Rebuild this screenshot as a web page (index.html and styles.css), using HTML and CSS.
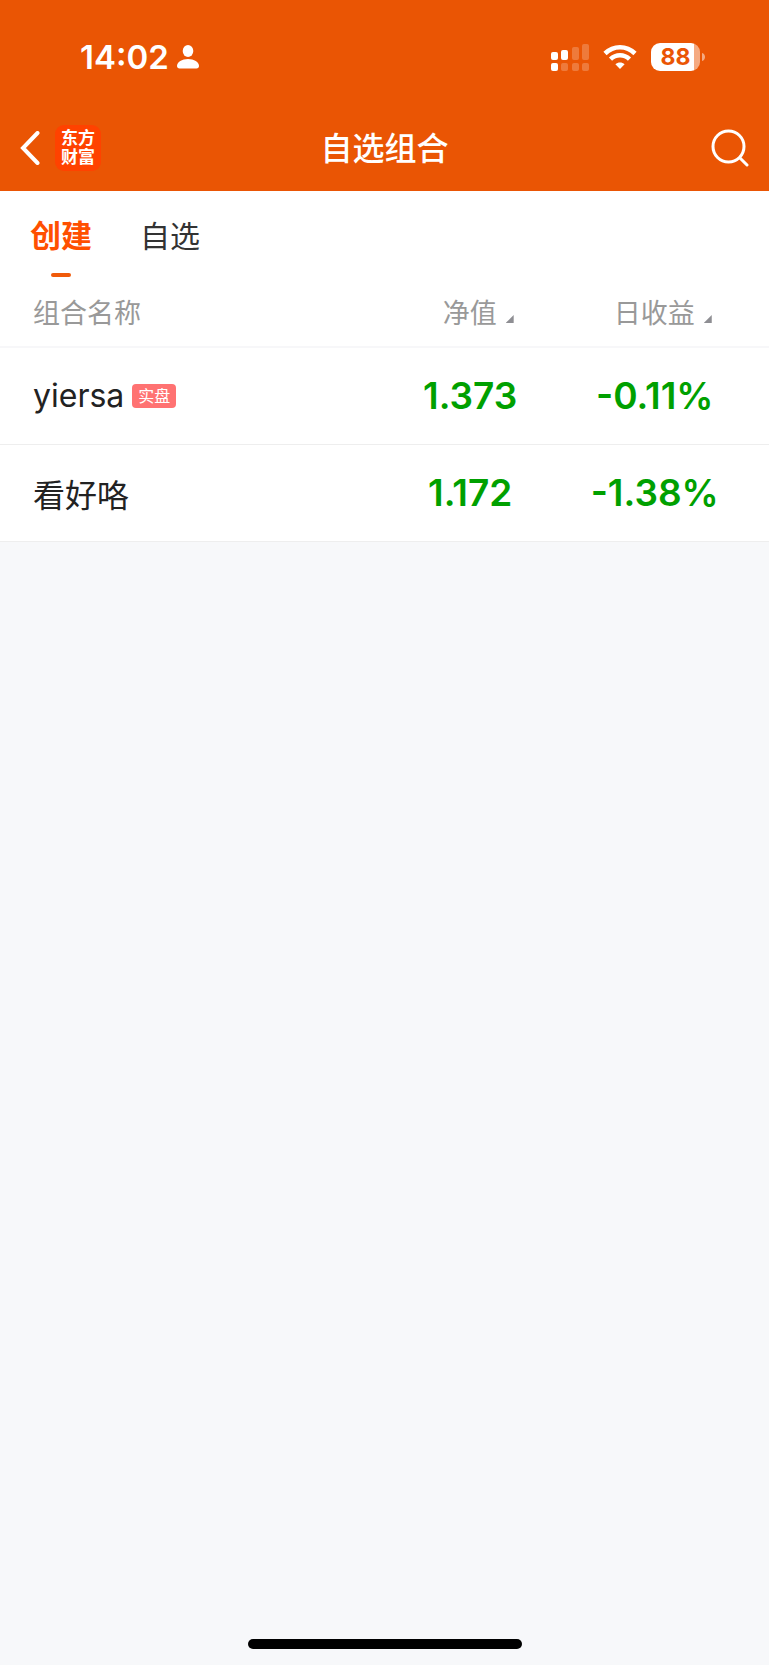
FILE: index.html
```html
<!DOCTYPE html>
<html lang="zh-CN">

<head>
    <meta charset="UTF-8">
    <meta name="viewport" content="width=device-width, initial-scale=1.0">
    <title>自选组合</title>
    <link rel="stylesheet" href="styles.css">
</head>

<body>
    <header class="header">
        <div class="status-bar">
            <div class="status-left">
                <span class="time">14:02</span>
                <svg width="22" height="24" viewBox="0 0 22 24" fill="#fff">
                    <ellipse cx="11" cy="6" rx="5.3" ry="6" />
                    <path d="M0 21C0 17 5 14 11 14s11 3 11 7c0 1.5-1 2.500-2.500 2.500h-17C1 23.500 0 22.500 0 21z" />
                </svg>
            </div>
            <div class="status-right">
                <svg width="38" height="28" viewBox="0 0 38 28" fill="#fff">
                    <rect x="0" y="9" width="7" height="8" rx="2" />
                    <rect x="10" y="7" width="7" height="10" rx="2" />
                    <rect x="0" y="20" width="7" height="8" rx="2" />
                    <g opacity=".22">
                        <rect x="21" y="4" width="7" height="13" rx="2" />
                        <rect x="31" y="1" width="7" height="16" rx="2" />
                        <rect x="10" y="20" width="7" height="8" rx="2" />
                        <rect x="21" y="20" width="7" height="8" rx="2" />
                        <rect x="31" y="20" width="7" height="8" rx="2" />
                    </g>
                </svg>
                <svg width="34" height="26" viewBox="0 0 34 26" fill="none" stroke="#fff" stroke-width="4.6">
                    <path d="M2 9.5C10.5 1.2 23.5 1.2 32 9.5" />
                    <path d="M7.500 15.200C13 10 21 10 26.500 15.200" />
                    <path d="M17 25l-4.600-4.700c2.600-2.500 6.600-2.500 9.200 0z" fill="#fff" stroke="none" />
                </svg>
                <div class="battery">
                    <span class="battery-level">88</span>
                    <svg width="3" height="8" viewBox="0 0 3 8" fill="#fff" opacity=".5">
                        <path d="M0 0c4 1 4 7 0 8z" />
                    </svg>
                </div>
            </div>
        </div>
        <nav class="nav-bar">
            <div class="nav-left">
                <button class="icon-btn" aria-label="返回">
                    <svg width="20" height="34" viewBox="0 0 20 34" fill="none" stroke="#fff" stroke-width="4" stroke-linecap="round">
                        <path d="M17.5 2L3 17l14.5 15" />
                    </svg>
                </button>
                <a class="logo" href="#"><span>东方</span><span>财富</span></a>
            </div>
            <h1 class="title">自选组合</h1>
            <button class="icon-btn" aria-label="搜索">
                <svg width="38" height="38" viewBox="0 0 38 38" fill="none" stroke="#fff" stroke-width="3" stroke-linecap="round">
                    <circle cx="17.5" cy="17.5" r="15.5" />
                    <path d="M29 29l7 7" />
                </svg>
            </button>
        </nav>
    </header>

    <main class="content">
        <div class="tabs">
            <button class="tab active">创建</button>
            <button class="tab">自选</button>
        </div>
        <table class="list">
            <thead>
                <tr>
                    <th class="name">组合名称</th>
                    <th><button class="sort">净值<i class="arrow"></i></button></th>
                    <th><button class="sort">日收益<i class="arrow"></i></button></th>
                    <th class="edge"></th>
                </tr>
            </thead>
            <tbody>
                <tr>
                    <td class="name"><div class="name-cell">yiersa <span class="tag">实盘</span></div></td>
                    <td class="value">1.373</td>
                    <td class="value">-0.11%</td>
                    <td class="edge"></td>
                </tr>
                <tr>
                    <td class="name"><div class="name-cell">看好咯</div></td>
                    <td class="value">1.172</td>
                    <td class="value">-1.38%</td>
                    <td class="edge"></td>
                </tr>
            </tbody>
        </table>
    </main>

    <div class="home-indicator"></div>
</body>

</html>
```

FILE: styles.css
```css
* {
    box-sizing: border-box;
}

body {
    margin: 0;
    min-height: 100vh;
    display: flex;
    flex-direction: column;
    background: #f7f8fa;
    color: #222;
    font-family: Inter, "Noto Sans CJK SC", sans-serif;
}

button {
    padding: 0;
    border: none;
    background: none;
    color: inherit;
    font: inherit;
}

svg {
    display: block;
}

.header {
    background: #ea5504;
    color: #fff;
}

.status-bar {
    display: flex;
    justify-content: space-between;
    align-items: center;
    height: 105px;
    padding: 9px 64px 0 80px;
}

.status-left,
.status-right {
    display: flex;
    align-items: center;
}

.status-left {
    gap: 8px;
}

.status-right {
    gap: 14px;
}

.time {
    font-size: 33px;
    font-weight: 600;
    line-height: 40px;
}

.battery {
    display: flex;
    align-items: center;
    gap: 2px;
}

.battery-level {
    width: 49px;
    height: 28px;
    border-radius: 9px;
    background: linear-gradient(90deg, #fff 88%, #f5aa81 88%);
    color: #ea5504;
    font-size: 23px;
    font-weight: 700;
    line-height: 28px;
    text-align: center;
}

.nav-bar {
    display: grid;
    grid-template-columns: 1fr auto 1fr;
    align-items: center;
    height: 86px;
    padding: 0 20px;
}

.nav-bar > .icon-btn {
    justify-self: end;
}

.nav-left {
    display: flex;
    align-items: center;
    gap: 15px;
}

.logo {
    display: flex;
    flex-direction: column;
    align-items: center;
    justify-content: center;
    width: 46px;
    height: 46px;
    border-radius: 9px;
    background: #ff4200;
    color: #fff;
    font-size: 17px;
    font-weight: 700;
    line-height: 19px;
    text-decoration: none;
}

.title {
    margin: 0;
    padding-top: 2px;
    font-size: 32px;
    font-weight: 500;
    line-height: 48px;
}

.content {
    background: #fff;
}

.tabs {
    display: flex;
    gap: 48px;
    padding: 21px 30px 0;
}

.tab {
    display: flex;
    flex-direction: column;
    align-items: center;
    gap: 13px;
    color: #333;
    font-size: 30px;
    line-height: 48px;
}

.tab.active {
    color: #ff5000;
    font-size: 31px;
    font-weight: 700;
}

.tab.active::after {
    content: "";
    width: 20px;
    height: 4px;
    border-radius: 2px;
    background: #f05a0a;
}

.list {
    width: 100%;
    border-collapse: collapse;
    table-layout: fixed;
}

.list th {
    width: 24%;
    height: 70px;
    padding: 0;
    border-bottom: 2px solid #f7f7f9;
    color: #999;
    font-size: 27px;
    font-weight: 400;
}

.list td {
    height: 97px;
    padding: 0;
    border-bottom: 1px solid #eee;
}

.list .name {
    width: auto;
    padding-left: 33px;
    text-align: left;
}

.list .edge {
    width: 22px;
}

.sort {
    display: inline-flex;
    align-items: baseline;
    gap: 9px;
    padding-left: 16px;
}

.arrow {
    width: 8px;
    height: 8px;
    background: #8e8e93;
    clip-path: polygon(100% 0, 100% 100%, 0 100%);
}

.name-cell {
    display: flex;
    align-items: center;
    gap: 8px;
    font-size: 32px;
}

.tag {
    padding: 0 6px;
    border-radius: 4px;
    background: #ff7272;
    color: #fff;
    font-size: 16px;
    line-height: 24px;
}

.value {
    color: #00a000;
    font-size: 37px;
    font-weight: 600;
    text-align: center;
}

.home-indicator {
    width: 274px;
    height: 10px;
    margin: auto auto 16px;
    border-radius: 5px;
    background: #000;
}
```
